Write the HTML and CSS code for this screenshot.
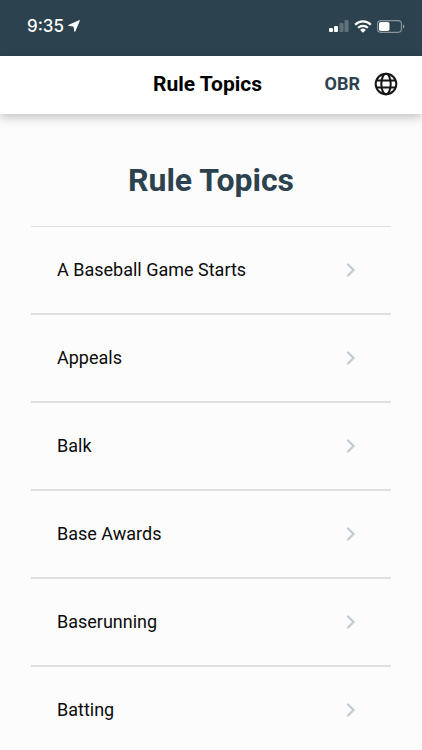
FILE: index.html
```html
<!DOCTYPE html>
<html lang="en">
<head>
<meta charset="utf-8">
<meta name="viewport" content="width=device-width, initial-scale=1">
<title>Rule Topics</title>
<link rel="stylesheet" href="styles.css">
</head>
<body>
<div class="status">
  <div class="clock">
    <span>9:35</span>
    <svg width="12" height="12" viewBox="0 0 12 12" aria-hidden="true"><path d="M11.400.6 6.800 11.400 6 6.200.6 5.400z" fill="#fff" stroke="#fff" stroke-width="1" stroke-linejoin="round"/></svg>
  </div>
  <div class="indicators">
    <svg width="20" height="13" viewBox="0 0 20 13" aria-hidden="true"><g fill="#fff"><rect x="0" y="8" width="4" height="4" rx="1"/><rect x="5" y="6" width="4" height="6" rx="1"/><g opacity=".25"><rect x="10.500" y="3" width="4" height="9" rx="1"/><rect x="15.500" y="0" width="4" height="12" rx="1"/></g></g></svg>
    <svg width="18" height="13" viewBox="0 0 18 13" aria-hidden="true"><g fill="none" stroke="#fff" stroke-width="2.200"><path d="M1.200 4.700a11 11 0 0 1 15.600 0"/><path d="M4.100 7.800a7 7 0 0 1 9.800 0"/></g><path d="M6.200 9.900a4 4 0 0 1 5.600 0L9 12.800z" fill="#fff"/></svg>
    <svg width="28" height="13" viewBox="0 0 28 13" aria-hidden="true"><rect x=".6" y=".6" width="23.800" height="11.800" rx="3.300" fill="none" stroke="#fff" stroke-opacity=".45" stroke-width="1.100"/><rect x="2" y="2" width="10.500" height="9" rx="1.800" fill="#fff"/><path d="M26 4.500v4q1.300-.5 1.300-2t-1.300-2z" fill="#fff" opacity=".5"/></svg>
  </div>
</div>
<header class="bar">
  <span class="bar-title">Rule Topics</span>
  <div class="actions">
    <button class="ruleset" type="button">OBR</button>
    <button class="globe" type="button" aria-label="Language">
      <svg width="24" height="24" viewBox="0 0 24 24" aria-hidden="true"><g fill="none" stroke="#151515" stroke-width="2"><circle cx="12" cy="12" r="10.300"/><ellipse cx="12" cy="12" rx="4.700" ry="10.300"/><path d="M2.600 8.500h18.800M2.600 15.500h18.800"/></g></svg>
    </button>
  </div>
</header>
<main class="content">
  <h1>Rule Topics</h1>
  <ul class="topics">
    <li><a href="#game-starts">A Baseball Game Starts<svg width="10" height="14" viewBox="0 0 10 14" aria-hidden="true"><path d="m2 1.500 5.500 5.500L2 12.500"/></svg></a></li>
    <li><a href="#appeals">Appeals<svg width="10" height="14" viewBox="0 0 10 14" aria-hidden="true"><path d="m2 1.500 5.500 5.500L2 12.500"/></svg></a></li>
    <li><a href="#balk">Balk<svg width="10" height="14" viewBox="0 0 10 14" aria-hidden="true"><path d="m2 1.500 5.500 5.500L2 12.500"/></svg></a></li>
    <li><a href="#base-awards">Base Awards<svg width="10" height="14" viewBox="0 0 10 14" aria-hidden="true"><path d="m2 1.500 5.500 5.500L2 12.500"/></svg></a></li>
    <li><a href="#baserunning">Baserunning<svg width="10" height="14" viewBox="0 0 10 14" aria-hidden="true"><path d="m2 1.500 5.500 5.500L2 12.500"/></svg></a></li>
    <li><a href="#batting">Batting<svg width="10" height="14" viewBox="0 0 10 14" aria-hidden="true"><path d="m2 1.500 5.500 5.500L2 12.500"/></svg></a></li>
  </ul>
</main>
</body>
</html>
```
FILE: styles.css
```css
* {
  box-sizing: border-box;
}

body {
  margin: 0;
  height: 100vh;
  display: flex;
  flex-direction: column;
  overflow: hidden;
  background: #fcfcfc;
  color: #0b0b0b;
  font-family: Roboto, "Liberation Sans", sans-serif;
}

.status {
  flex: none;
  display: flex;
  justify-content: space-between;
  align-items: center;
  padding: 16px 17px 20px 27px;
  background: #2c434f;
  color: #fff;
}

.clock {
  display: flex;
  align-items: center;
  gap: 4px;
  font: 500 17px/20px Inter, sans-serif;
}

.indicators {
  display: flex;
  align-items: center;
  gap: 5px;
}

.bar {
  flex: none;
  position: relative;
  z-index: 1;
  display: grid;
  grid-template-columns: 1fr auto 1fr;
  align-items: center;
  padding: 14px 24px 16px 17px;
  background: #fff;
  box-shadow: 0 3px 10px rgba(0, 0, 0, 0.25);
}

.bar-title {
  grid-column: 2;
  color: #000;
  font-size: 21px;
  font-weight: 700;
  line-height: 28px;
}

.actions {
  display: flex;
  justify-content: flex-end;
  align-items: center;
  gap: 14px;
}

button {
  padding: 0;
  border: 0;
  background: none;
  font-family: inherit;
}

.ruleset {
  color: #2c434f;
  font-size: 18px;
  font-weight: 700;
  line-height: 24px;
}

.globe {
  display: flex;
}

.content {
  flex: 1;
  min-height: 0;
  overflow-x: hidden;
  overflow-y: auto;
  scrollbar-width: none;
  padding: 46px 31px 0;
}

h1 {
  margin: 0 0 26px;
  color: #2c434f;
  font-size: 32px;
  font-weight: 700;
  line-height: 40px;
  text-align: center;
}

.topics {
  margin: 0;
  padding: 0;
  list-style: none;
  border-top: 1px solid #dfe0e0;
}

.topics li {
  border-bottom: 2px solid #dfe0e0;
}

.topics a {
  display: flex;
  justify-content: space-between;
  align-items: center;
  height: 86px;
  padding: 0 35px 0 26px;
  color: inherit;
  font-size: 18px;
  line-height: 24px;
  text-decoration: none;
}

.topics path {
  fill: none;
  stroke: #c3cdd6;
  stroke-width: 2.4;
  stroke-linecap: round;
}
```
